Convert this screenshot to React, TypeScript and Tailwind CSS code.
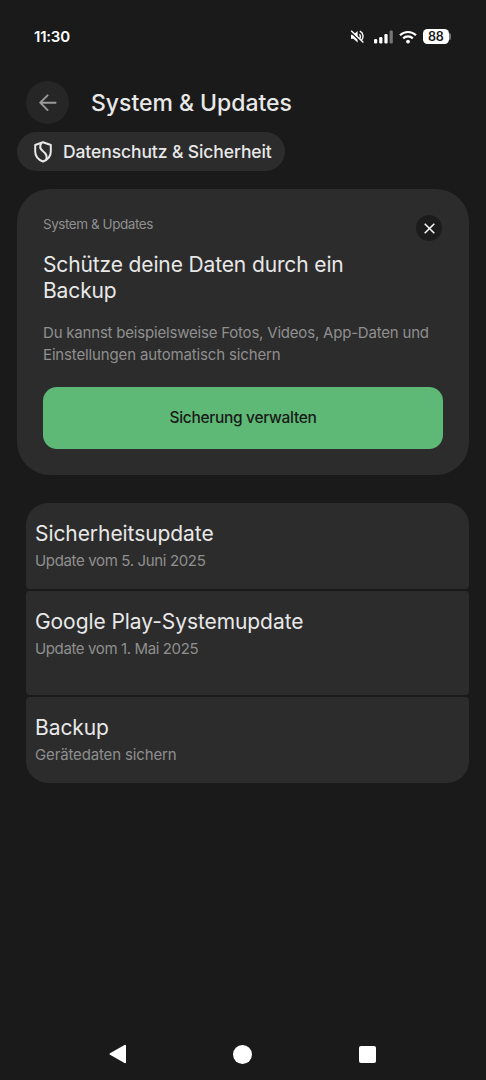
import React from 'react';

interface UpdateItem {
  title: string;
  subtitle: string;
  className: string;
  subtitleClassName: string;
}

const items: UpdateItem[] = [
  {
    title: 'Sicherheitsupdate',
    subtitle: 'Update vom 5. Juni 2025',
    className: 'h-[86px] rounded-t-[22px] rounded-b-[4px]',
    subtitleClassName: 'tracking-[-0.35px]',
  },
  {
    title: 'Google Play-Systemupdate',
    subtitle: 'Update vom 1. Mai 2025',
    className: 'h-[104px] rounded-[4px]',
    subtitleClassName: 'tracking-[-0.38px]',
  },
  {
    title: 'Backup',
    subtitle: 'Gerätedaten sichern',
    className: 'h-[86px] rounded-t-[4px] rounded-b-[22px]',
    subtitleClassName: 'tracking-[-0.14px]',
  },
];

const StatusBar: React.FC = () => (
  <div className="flex h-[72px] items-center justify-between pl-[34px] pr-[35px] pt-px text-white">
    <span className="pt-[2px] text-[15px] font-semibold tracking-[-0.2px]">11:30</span>
    <div className="flex items-center">
      {/* Muted speaker */}
      <svg className="mr-[9px]" width="15" height="16" viewBox="0 0 15 16" fill="none" stroke="white" strokeWidth="1.4">
        <path d="M1 5.8h2.4L7.6 2v11.5L3.4 9.8H1z" fill="white" stroke="none" />
        <path d="M9.4 5.2c1.3 1.2 1.3 3.6 0 4.9M9.8 2.2c3.6 1.6 4.3 6.6 1.6 9.4" />
        <path d="M0.6 2.9l12 11.6" stroke="#1a1a1a" strokeWidth="1.6" />
        <path d="M1.2 1.8l12.2 11.8" />
      </svg>
      {/* Signal strength */}
      <svg className="mr-[6px]" width="19" height="14" viewBox="0 0 19 14" fill="white">
        <rect x="0" y="9" width="3.2" height="4.5" rx="1.2" />
        <rect x="5.2" y="7" width="3.2" height="6.5" rx="1.2" />
        <rect x="10.4" y="4" width="3.2" height="9.5" rx="1.2" />
        <rect x="15.6" y="0.5" width="3.2" height="13" rx="1.2" fill="#777" />
      </svg>
      {/* Wifi */}
      <svg className="mr-[6px]" width="18" height="14" viewBox="0 0 18 14" fill="none" stroke="white" strokeWidth="2.2">
        <path d="M1 5.2c4.5-4.3 11.5-4.3 16 0" />
        <path d="M4.2 8.4c2.7-2.6 6.9-2.6 9.6 0" />
        <circle cx="9" cy="11.6" r="1.9" fill="white" stroke="none" />
      </svg>
      <div className="flex h-[14.5px] w-[25.5px] items-center justify-center rounded-[4.5px] bg-white pt-[1.5px] text-[12.5px] font-semibold leading-none tracking-[-0.2px] text-[#1a1a1a]">
        88
      </div>
      <div className="ml-[0.5px] h-[7px] w-[2px] rounded-r-full bg-[#777]" />
    </div>
  </div>
);

export default function App() {
  return (
    <div className="flex h-[1080px] w-[486px] flex-col overflow-hidden bg-[#1a1a1a] font-['Inter',sans-serif] text-[#e8e8e8]">
      <StatusBar />

      <header className="mt-[9px] flex h-[43px] items-center pl-[26px]">
        <button className="flex size-[43px] items-center justify-center rounded-full bg-[#262626]">
          <svg width="18" height="18" viewBox="0 0 18 18" fill="none" stroke="#9a9a9a" strokeWidth="1.9" strokeLinecap="round" strokeLinejoin="round">
            <path d="M16.6 8.7H1.4M8.6 1.3L1.2 8.7l7.4 7.4" />
          </svg>
        </button>
        <h1 className="ml-[22px] pt-px text-[23px] font-medium tracking-[-0.03px]">System &amp; Updates</h1>
      </header>

      <div className="ml-[17px] mt-[8px] flex h-[39px] w-[268px] items-center rounded-full bg-[#2c2c2c] pl-[17px]">
        <svg width="18" height="22" viewBox="0 0 18 22" fill="none" stroke="#e8e8e8" strokeWidth="2" strokeLinejoin="round">
          <path d="M9 1.2L1.2 4v6.5c0 4.6 3.2 8.3 7.8 10 4.6-1.7 7.8-5.4 7.8-10V4z" />
          <path d="M7.4 2C5.2 5.4 6 8 9 10.2s4.6 4.6 3.2 8.4" />
        </svg>
        <span className="ml-[11px] pt-px text-[17.5px] font-medium tracking-[-0.1px]">Datenschutz &amp; Sicherheit</span>
      </div>

      <section className="ml-[17px] mt-[18px] flex h-[286px] w-[452px] flex-col rounded-[33px] bg-[#2c2c2c] px-[26px] pt-[26px]">
        <div className="flex h-[26px] items-start justify-between">
          <span className="text-[13.5px] leading-[18px] tracking-[-0.45px] text-[#8f8f8f]">System &amp; Updates</span>
          <button className="mr-px flex size-[26px] items-center justify-center rounded-full bg-[#1c1c1c]">
            <svg width="11" height="11" viewBox="0 0 11 11" stroke="white" strokeWidth="1.5">
              <path d="M0.7 0.7l9.6 9.6M10.3 0.7L0.7 10.3" />
            </svg>
          </button>
        </div>
        <h2 className="mt-[11px] w-[330px] text-[21px] leading-[26px] tracking-[-0.13px]">Schütze deine Daten durch ein Backup</h2>
        <p className="mt-[18px] whitespace-nowrap text-[15px] leading-[22px] tracking-[-0.2px] text-[#8f8f8f]">
          Du kannst beispielsweise Fotos, Videos, App-Daten und
          <br />
          <span className="tracking-[-0.14px]">Einstellungen automatisch sichern</span>
        </p>
        <button className="mt-[21px] h-[62px] w-full rounded-[14px] bg-[#5db975] text-[15.5px] font-medium tracking-[-0.3px] text-[#1a1a1a]">
          Sicherung verwalten
        </button>
      </section>

      <div className="ml-[26px] mt-[28px] flex w-[443px] flex-col gap-[2px]">
        {items.map((item) => (
          <div key={item.title} className={`bg-[#2c2c2c] pl-[9px] pt-[18px] ${item.className}`}>
            <p className="text-[21px] leading-[26px] tracking-[-0.07px]">{item.title}</p>
            <p className={`mt-px text-[15px] leading-[26px] text-[#8f8f8f] ${item.subtitleClassName}`}>{item.subtitle}</p>
          </div>
        ))}
      </div>

      {/* Android navigation */}
      <nav className="mt-auto flex h-[52px] items-center justify-between pl-[108.5px] pr-[110px]">
        <svg width="18" height="20" viewBox="0 0 18 20" fill="white" stroke="white" strokeWidth="2" strokeLinejoin="round">
          <path d="M1.5 10L16 1.8v16.4z" />
        </svg>
        <div className="mr-px size-[19px] rounded-full bg-white" />
        <div className="size-[17px] rounded-[2px] bg-white" />
      </nav>
    </div>
  );
}
